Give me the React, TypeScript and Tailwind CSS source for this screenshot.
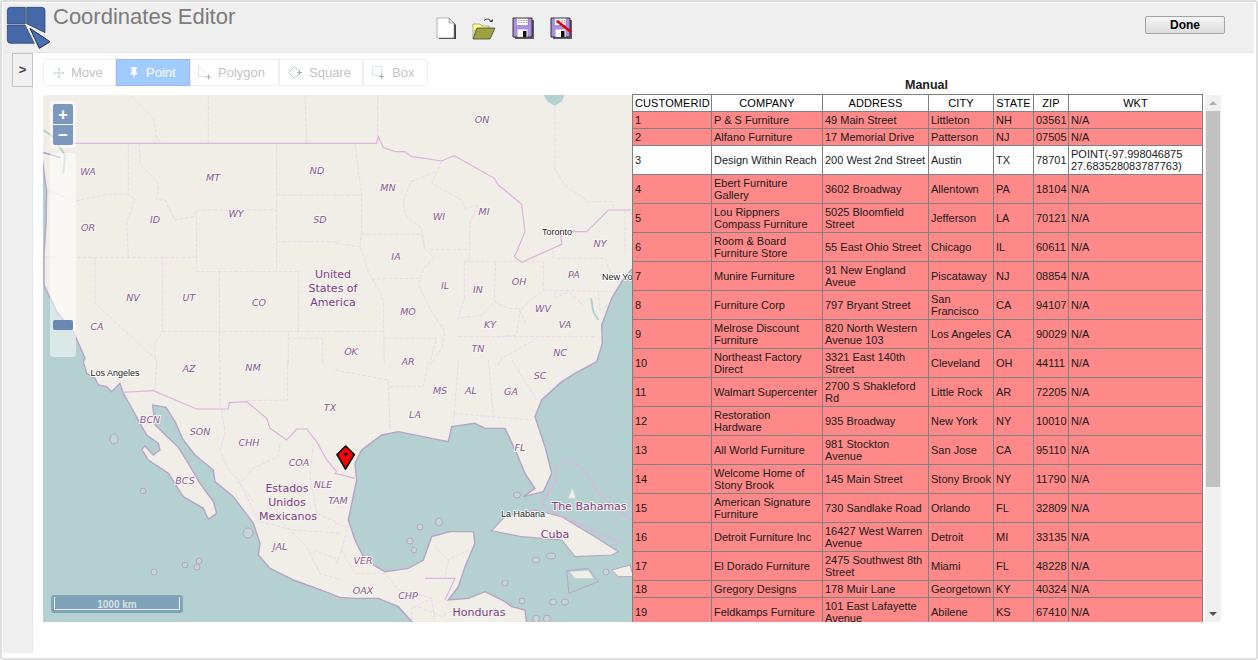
import { ReactNode } from "react";

type Row = [string, string, string, string, string, string, string];

const NA = "N/A";
const rows: Row[] = [
  ["1", "P & S Furniture", "49 Main Street", "Littleton", "NH", "03561", NA],
  ["2", "Alfano Furniture", "17 Memorial Drive", "Patterson", "NJ", "07505", NA],
  ["3", "Design Within Reach", "200 West 2nd Street", "Austin", "TX", "78701", "POINT(-97.998046875 27.683528083787763)"],
  ["4", "Ebert Furniture Gallery", "3602 Broadway", "Allentown", "PA", "18104", NA],
  ["5", "Lou Rippners Compass Furniture", "5025 Bloomfield Street", "Jefferson", "LA", "70121", NA],
  ["6", "Room & Board Furniture Store", "55 East Ohio Street", "Chicago", "IL", "60611", NA],
  ["7", "Munire Furniture", "91 New England Aveue", "Piscataway", "NJ", "08854", NA],
  ["8", "Furniture Corp", "797 Bryant Street", "San Francisco", "CA", "94107", NA],
  ["9", "Melrose Discount Furniture", "820 North Western Avenue 103", "Los Angeles", "CA", "90029", NA],
  ["10", "Northeast Factory Direct", "3321 East 140th Street", "Cleveland", "OH", "44111", NA],
  ["11", "Walmart Supercenter", "2700 S Shakleford Rd", "Little Rock", "AR", "72205", NA],
  ["12", "Restoration Hardware", "935 Broadway", "New York", "NY", "10010", NA],
  ["13", "All World Furniture", "981 Stockton Avenue", "San Jose", "CA", "95110", NA],
  ["14", "Welcome Home of Stony Brook", "145 Main Street", "Stony Brook", "NY", "11790", NA],
  ["15", "American Signature Furniture", "730 Sandlake Road", "Orlando", "FL", "32809", NA],
  ["16", "Detroit Furniture Inc", "16427 West Warren Avenue", "Detroit", "MI", "33135", NA],
  ["17", "El Dorado Furniture", "2475 Southwest 8th Street", "Miami", "FL", "48228", NA],
  ["18", "Gregory Designs", "178 Muir Lane", "Georgetown", "KY", "40324", NA],
  ["19", "Feldkamps Furniture", "101 East Lafayette Avenue", "Abilene", "KS", "67410", NA],
];

const headers = ["CUSTOMERID", "COMPANY", "ADDRESS", "CITY", "STATE", "ZIP", "WKT"];
const colWidths = [79, 111, 106, 65, 40, 35, 134];

// map points were read off 3x crops, so each list has its own origin
const pts = (ox: number, oy: number, c: number[]) => {
  const out: string[] = [];
  for (let i = 0; i < c.length; i += 2) out.push(`${ox + c[i] / 3},${oy + c[i + 1] / 3}`);
  return out.join(" ");
};
const a = (c: number[]) => pts(40, 95, c);
const b = (c: number[]) => pts(335, 95, c);
const d = (c: number[]) => pts(40, 360, c);
const e = (c: number[]) => pts(335, 360, c);

const pacific = [
  a([8, 200, 20, 290, 18, 380, 12, 480, 12, 570, 50, 650, 100, 710, 135, 790]),
  d([130, 5, 140, 40, 165, 55, 175, 75, 200, 80, 215, 95, 240, 70, 250, 100, 270, 135, 300, 190, 320, 225, 355, 250, 360, 270, 340, 285, 315, 258, 305, 268, 325, 300, 385, 340, 420, 395, 430, 410, 490, 445, 505, 478, 530, 460, 520, 425, 480, 370, 445, 310, 415, 262, 345, 195, 338, 135, 378, 142, 405, 185, 430, 240, 465, 285, 520, 330, 525, 365, 580, 410, 640, 490, 660, 550, 655, 585, 690, 625, 760, 660, 830, 685, 900, 712]),
  e([60, 715, 130, 715, 190, 740, 235, 790]),
  "40,625 40,160",
].join(" ");

const gulf = [
  "635,268",
  b([888, 525, 860, 560, 830, 610, 800, 690, 802, 745, 785, 800]),
  e([720, 40, 680, 65, 620, 120, 600, 170, 630, 260, 650, 340, 625, 395, 565, 410, 600, 385, 570, 340, 545, 280, 510, 205, 450, 205, 420, 190, 350, 200, 340, 245, 290, 235, 190, 215, 140, 225, 80, 270, 60, 310, 65, 360, 40, 480, 60, 540, 90, 600, 150, 635, 220, 625, 265, 600, 290, 530, 345, 515, 415, 515, 420, 550, 390, 620, 370, 680, 340, 720, 400, 715, 450, 695, 510, 725, 530, 740, 570, 750, 575, 790]),
  "635,625",
].join(" ");

const cuba = e([470, 512, 510, 470, 600, 450, 680, 470, 780, 530, 850, 575, 830, 585, 720, 590, 680, 540, 560, 530]);
const jamaica = e([695, 632, 760, 625, 790, 665, 702, 700]);
const hispaniola = e([830, 630, 885, 615, 895, 650, 850, 650]);

const borders = [
  a([100, 145, 400, 145]) + " " + b([125, 145, 130, 125, 145, 158, 180, 170, 210, 170, 230, 185, 270, 190, 320, 198, 358, 182, 478, 250, 490, 270, 520, 295, 560, 328, 570, 410, 545, 470, 538, 485, 560, 502, 680, 448, 678, 425, 710, 410, 755, 410, 820, 345, 888, 345]),
  d([245, 97, 340, 92, 470, 147, 565, 147, 568, 128, 620, 125, 680, 175, 690, 205, 740, 240, 770, 207, 800, 207, 830, 245, 860, 300, 890, 335]) + " " + e([0, 340, 60, 355]),
  e([270, 655, 360, 655, 330, 720]),
  e([665, 320, 700, 300, 750, 330, 790, 400, 888, 480]),
  e([620, 430, 660, 370, 665, 320]),
  e([620, 430, 640, 450, 860, 550]),
];

const states = [
  a([505, 0, 505, 145]),
  a([795, 0, 800, 145]),
  a([270, 0, 340, 70, 350, 130, 365, 145]),
  a([265, 145, 265, 295, 285, 315, 260, 380, 265, 487]),
  a([298, 145, 300, 205, 355, 265, 350, 315, 375, 315, 405, 375, 460, 365, 470, 345, 710, 345]),
  a([470, 345, 470, 530, 775, 530, 775, 710]),
  a([710, 145, 710, 530]),
  a([710, 300, 900, 300]),
  a([710, 440, 900, 440]),
  a([538, 530, 538, 810]),
  a([367, 487, 367, 710, 345, 745, 345, 795]),
  a([165, 487, 165, 625, 350, 795]),
  a([12, 487, 470, 487]),
  a([265, 297, 200, 298, 100, 320, 60, 300, 20, 285]),
  a([367, 710, 900, 710]),
  a([745, 710, 745, 810]),
  a([742, 730, 848, 730, 848, 810]),
  b([128, 0, 128, 125]),
  b([60, 145, 70, 230, 80, 300, 80, 415, 75, 450, 100, 530, 110, 550, 135, 590, 145, 620, 148, 810]),
  b([0, 300, 80, 300]),
  b([80, 418, 260, 418, 268, 462]),
  b([0, 445, 75, 455]),
  b([110, 552, 250, 550]),
  b([0, 710, 145, 710]),
  b([145, 730, 305, 730, 285, 800]),
  b([320, 198, 290, 265, 380, 315, 390, 340, 430, 330]),
  b([300, 230, 228, 260, 205, 320, 210, 360, 260, 400, 270, 460, 298, 490, 265, 520, 250, 570, 290, 650, 330, 710, 320, 760, 285, 810]),
  b([285, 463, 400, 463]),
  b([430, 330, 405, 380, 402, 500]),
  b([388, 500, 625, 500, 625, 585, 580, 620, 555, 650, 575, 690]),
  b([388, 500, 388, 610, 370, 670, 440, 660, 478, 620, 520, 640, 555, 640, 545, 720, 480, 727]),
  b([482, 500, 478, 620]),
  b([370, 725, 780, 725]),
  b([625, 585, 830, 590]),
  b([655, 465, 655, 490, 810, 490, 825, 530, 860, 545]),
  b([660, 590, 660, 610, 700, 590, 745, 630]),
  b([660, 30, 660, 225, 690, 270, 760, 320, 830, 320, 838, 345]),
  b([870, 345, 870, 480]),
  b([790, 590, 795, 645, 820, 630]),
  b([590, 740, 500, 790, 490, 810]),
  d([540, 0, 540, 147]),
  d([743, 0, 743, 120, 620, 122]),
  d([350, 0, 345, 92]),
  d([545, 150, 555, 220, 540, 270, 560, 320, 600, 370, 640, 425]),
  d([720, 250, 715, 290, 640, 325, 600, 370]),
  d([820, 250, 810, 350, 830, 460, 900, 490]),
  d([600, 370, 660, 490]),
  d([660, 485, 760, 510, 900, 520]),
  d([720, 480, 800, 560, 840, 640, 900, 660]),
  d([820, 570, 900, 600]),
  e([0, 30, 160, 60, 165, 210]),
  e([165, 80, 265, 80, 275, 30, 280, 0]),
  e([370, 0, 355, 200]),
  e([460, 0, 475, 170]),
  e([355, 160, 590, 180]),
  e([530, 0, 605, 120]),
  e([0, 490, 40, 500, 20, 570, 0, 620]),
  e([20, 570, 60, 640, 150, 640, 190, 690, 240, 700, 290, 715, 230, 745, 230, 785]),
  e([290, 715, 300, 785]),
  e([300, 560, 340, 600, 400, 570]),
  e([340, 600, 330, 655]),
  e([250, 740, 320, 770, 360, 745]),
];

const islands: [number, number, number, number][] = [
  [114, 439, 4, 5], [143, 491, 2.8, 2.8], [185, 565, 2.8, 2.8], [199, 561, 2.8, 2.8], [197, 567, 3, 3], [154, 572, 3, 3],
  [248, 533, 5, 5], [420, 527, 3, 3], [439, 522, 3.5, 4], [410, 541, 3.3, 3], [414, 550, 2.6, 3], [517, 495, 3.5, 3],
  [536, 560, 4, 3], [551, 556, 4.5, 3], [606, 572, 3, 3], [505, 583, 3, 3], [553, 602, 3.5, 3], [565, 602, 3.5, 3], [522, 601, 3, 3], [536, 619, 3.5, 4], [547, 619, 3.5, 4],
];

const stateLabels: [string, number, number][] = [
  ["ON", 482, 119], ["WA", 88, 171], ["MT", 213, 177], ["ND", 317, 170], ["ID", 155, 219], ["OR", 88, 227], ["WY", 236, 213], ["SD", 320, 219],
  ["MN", 388, 187], ["WI", 439, 216], ["MI", 484, 211], ["NV", 133, 297], ["UT", 189, 297], ["CO", 259, 302], ["CA", 97, 326], ["IA", 396, 256],
  ["IL", 445, 285], ["IN", 478, 289], ["OH", 519, 281], ["PA", 574, 274], ["NY", 600, 243], ["MO", 408, 311], ["KY", 490, 324], ["WV", 543, 308],
  ["VA", 565, 324], ["TN", 478, 348], ["NC", 560, 352], ["OK", 351, 351], ["AR", 408, 361], ["AZ", 189, 368], ["NM", 253, 367], ["TX", 330, 407],
  ["MS", 440, 390], ["AL", 471, 390], ["GA", 511, 391], ["SC", 540, 375], ["LA", 415, 414], ["FL", 520, 447], ["BCN", 150, 419], ["SON", 200, 431],
  ["CHH", 249, 442], ["COA", 299, 462], ["NLE", 323, 484], ["TAM", 338, 500], ["BCS", 185, 480], ["JAL", 280, 546], ["VER", 363, 560], ["OAX", 363, 590], ["CHP", 408, 595],
];

const countryLabels: [string, number, number][] = [
  ["United", 333, 274], ["States of", 333, 288], ["America", 333, 302], ["Estados", 287, 488], ["Unidos", 287, 502], ["Mexicanos", 288, 516],
  ["The Bahamas", 589, 506], ["Cuba", 555, 534], ["Honduras", 479, 612],
];

const cityLabels: [string, number, number][] = [
  ["Toronto", 557, 232], ["New York", 621, 277], ["Los Angeles", 115, 373], ["La Habana", 523, 514],
];

const MapDrawing = () => (
  <svg viewBox="43 95 589 527" className="absolute inset-0 h-full w-full font-['DejaVu_Sans',sans-serif]">
    <rect x="43" y="95" width="589" height="527" fill="#f1eee8" />
    {states.map((s, i) => (
      <polyline key={i} points={s} fill="none" stroke="#e8d6e8" strokeWidth="0.9" strokeDasharray="4 1.5" />
    ))}
    <polygon points={b([625, 0, 688, 0, 682, 18, 660, 32, 640, 22])} fill="#b5d0d0" />
    <polygon points={pacific} fill="#b5d0d0" stroke="#b7a3c6" strokeWidth="1.4" />
    <polygon points={gulf} fill="#b5d0d0" stroke="#b7a3c6" strokeWidth="1.4" />
    <polygon points={cuba} fill="#f1eee8" stroke="#b7a3c6" strokeWidth="1.1" />
    <polygon points={jamaica} fill="#b5d0d0" stroke="#b7a3c6" strokeWidth="1" />
    <polygon points={e([705, 635, 760, 632, 775, 655, 720, 655])} fill="#f1eee8" />
    <polygon points={hispaniola} fill="#f1eee8" stroke="#b7a3c6" strokeWidth="1" />
    <polyline points={a([10, 105, 40, 125, 55, 150, 75, 180, 70, 235])} fill="none" stroke="#b5d0d0" strokeWidth="2" />
    <polyline points={a([10, 172, 60, 188])} fill="none" stroke="#9f95bd" strokeWidth="1.4" />
    <polyline points={b([768, 610, 775, 650, 790, 675])} fill="none" stroke="#b5d0d0" strokeWidth="2" />
    {borders.map((s, i) => (
      <polyline key={i} points={s} fill="none" stroke="#dcb4dc" strokeWidth="1.2" />
    ))}
    {islands.map(([cx, cy, rx, ry], i) => (
      <ellipse key={i} cx={cx} cy={cy} rx={rx} ry={ry} fill="#c4d6d4" stroke="#b7a3c6" strokeWidth="1" />
    ))}
    <polygon points={e([700, 415, 712, 385, 722, 415])} fill="#f1eee8" />
    {stateLabels.map(([t, x, y]) => (
      <text key={t} x={x} y={y + 3.5} textAnchor="middle" fontSize="9.5" fontStyle="italic" fill="#8a5a8e" stroke="#f7f5f1" strokeWidth="2" paintOrder="stroke">
        {t}
      </text>
    ))}
    {countryLabels.map(([t, x, y]) => (
      <text key={t} x={x} y={y + 4} textAnchor="middle" fontSize="11" fill="#7c3f86" stroke="#f4f1ec" strokeWidth="2" paintOrder="stroke">
        {t}
      </text>
    ))}
    {cityLabels.map(([t, x, y]) => (
      <text key={t} x={x} y={y + 3} textAnchor="middle" fontSize="9" fontFamily="'Liberation Sans', Arial, sans-serif" fill="#222" stroke="#fff" strokeWidth="1.6" paintOrder="stroke">
        {t}
      </text>
    ))}
    <polygon points="345.7,446 337,454.5 345.5,469 354.300,454.5" fill="#f00" stroke="#000" strokeWidth="1.6" strokeLinejoin="round" />
    <path d="M345.7 452v4.5M343.5 454.3h4.5" stroke="#111" strokeWidth="1.4" />
  </svg>
);

// drawn in the crop's 3x units, so 165 units are 55 page pixels
const Logo = () => (
  <svg width="55" height="53" viewBox="0 0 165 159" className="absolute left-[-3px] top-[-3px]">
    <path d="M32 22h44v49H22V32a10 10 0 0 1 10-10z" fill="#4468a8" stroke="#26375c" strokeWidth="2" />
    <path d="M80 22h45a10 10 0 0 1 10 10v66L80 71z" fill="#4468a8" stroke="#26375c" strokeWidth="2" />
    <path d="M22 75h53l28 55H32a10 10 0 0 1-10-10z" fill="#4468a8" stroke="#26375c" strokeWidth="2" />
    <path d="M90 85l60 40-32 20z" fill="#4a70b2" stroke="#1c2a46" strokeWidth="3" strokeLinejoin="round" />
  </svg>
);

const NewFileIcon = () => (
  <svg width="22" height="23" viewBox="0 0 22 23">
    <path d="M3 3h12l5 5v14H3z" fill="#222" opacity="0.85" />
    <path d="M1 1h12l5 5v15H1z" fill="#fff" stroke="#888" strokeWidth="0.6" />
    <path d="M13 1v5h5z" fill="#ddd" stroke="#888" strokeWidth="0.6" />
  </svg>
);

const OpenIcon = () => (
  <svg width="24" height="23" viewBox="0 0 24 23">
    <path d="M12 3.500c3-2.500 6-1.500 7 1.500" fill="none" stroke="#444" strokeWidth="1" />
    <path d="M17.500 4.500l3 .5.5-3z" fill="#333" />
    <path d="M1 7h7l2 2h7v4H3v8H1z" fill="#ffff80" stroke="#777" strokeWidth="0.6" />
    <path d="M5 11h18l-5 11H1z" fill="#a0a040" stroke="#444" strokeWidth="0.8" />
  </svg>
);

const SaveIcon = ({ crossed }: { crossed?: boolean }) => (
  <svg width="23" height="23" viewBox="0 0 23 23">
    <path d="M3 3h19v19H3z" fill="#222" opacity="0.7" />
    <path d="M1 1h19v19H1z" fill="#ad8fe0" stroke="#222" strokeWidth="0.9" />
    <path d="M4.500 1.500h11.500v7H4.500z" fill="#fff" stroke="#777" strokeWidth="0.5" />
    <path d="M6 3.500h9M6 5.500h9" stroke="#888" strokeWidth="0.8" strokeDasharray="1 0.6" />
    <path d="M5.500 12.500h10v7.500h-10z" fill="#fff" />
    <path d="M11 14h3.500v6H11z" fill="#111" />
    {crossed && <path d="M7 4l14 11" stroke="#e00010" strokeWidth="2.600" />}
  </svg>
);

const iconStroke = "#c4ced4";

const MoveIcon = () => (
  <svg width="10" height="10" viewBox="0 0 11 11" fill="none" stroke={iconStroke}>
    <path d="M5.500 0v11M0 5.500h11M4 1.500l1.500-1.500L7 1.500M4 9.500l1.500 1.500L7 9.500M1.500 4L0 5.500 1.500 7M9.500 4L11 5.500 9.500 7" />
  </svg>
);

const PinIcon = () => (
  <svg width="10" height="12" viewBox="0 0 10 12" fill="#fff">
    <path d="M2 0h6v1.200L7.200 2v3.500L9 7.500H5.800L5 12l-.8-4.500H1l1.800-2V2L2 1.200z" />
  </svg>
);

const PolygonIcon = () => (
  <svg width="13" height="14" viewBox="0 0 13 14" fill="none" stroke="#bccbd8">
    <path d="M.5.500v10h8M.5.500l9 8" strokeDasharray="1 1" />
    <path d="M10.500 8.500v5M8 11h5" stroke="#9fb0bc" />
  </svg>
);

const SquareIcon = () => (
  <svg width="14" height="14" viewBox="0 0 14 14" fill="none" stroke="#b9cad8">
    <path d="M6.500.500l6 6-6 6-6-6z" />
    <path d="M9 6.500h5M11.500 4v5" stroke="#9fb0bc" />
  </svg>
);

const BoxIcon = () => (
  <svg width="13" height="13" viewBox="0 0 13 13" fill="none" stroke="#bccbd8">
    <path d="M.5.500h9v9h-9z" strokeDasharray="1 1" />
    <path d="M9.500 8v5M7 10.500h5" stroke="#9fb0bc" />
  </svg>
);

const ToolButton = ({ label, icon, size, active }: { label: string; icon: ReactNode; size: string; active?: boolean }) => (
  <div
    className={`flex h-full items-center gap-[7px] border text-[13px] ${size} ${
      active ? "border-[#9db4ff] bg-[#a0cbff] text-white" : "border-[#eeeeee] bg-white text-[#c4c4c4]"
    }`}
  >
    {icon}
    <span>{label}</span>
  </div>
);

const DataTable = () => (
  <table className="w-[570px] table-fixed border-collapse bg-white text-[11px] leading-[12px] text-[#1a1a1a]">
    <colgroup>
      {colWidths.map((w, i) => (
        <col key={i} style={{ width: w }} />
      ))}
    </colgroup>
    <thead>
      <tr className="h-[17px]">
        {headers.map((h) => (
          <th key={h} className="overflow-hidden border border-[#808080] px-[2px] py-[2px] text-center font-normal tracking-[0.1px] text-black">
            {h}
          </th>
        ))}
      </tr>
    </thead>
    <tbody>
      {rows.map((r) => (
        <tr key={r[0]} className={r[6] === NA ? "bg-[#ff8888]" : "bg-white"}>
          {r.map((c, i) => (
            <td key={i} className="border border-[#808080] px-[2px] py-[2px] align-middle">
              {c}
            </td>
          ))}
        </tr>
      ))}
    </tbody>
  </table>
);

const App = () => (
  <div className="relative h-[660px] w-[1258px] overflow-hidden rounded-[3px] border-2 border-[#dedede] bg-white p-px font-['Liberation_Sans',Arial,sans-serif]">
    <header className="relative flex h-[50px] w-[1251px] items-start border-b border-[#e2e8f4] bg-[#efefef]">
      <Logo />
      <h1 className="ml-[50px] mt-[2px] w-[200px] text-[22px] leading-[24px] text-[#7b7b7b]">Coordinates Editor</h1>
      <div className="ml-[183px] mt-[14px] flex items-start">
        <NewFileIcon />
        <div className="ml-[14px]"><OpenIcon /></div>
        <div className="ml-[16px]"><SaveIcon /></div>
        <div className="ml-[15px]"><SaveIcon crossed /></div>
      </div>
      <button className="absolute left-[1142px] top-[13px] h-[18px] w-[80px] rounded-[2px] border border-[#a3a3a3] bg-gradient-to-b from-[#f6f6f6] to-[#dcdcdc] text-[12px] font-bold leading-none text-black">
        Done
      </button>
    </header>

    <div className="flex h-[600px]">
      <aside className="relative w-[30px] shrink-0 border-r border-[#dfe6f4] bg-[#efefef]">
        <div className="ml-[9px] flex h-[34px] w-[21px] items-center justify-center border border-[#c4c4c4] bg-[#f0f0f0] pb-[1px] text-[13px] font-bold text-[#444]">
          &gt;
        </div>
      </aside>

      <main className="flex flex-1 items-start pl-[10px] pt-[6px]">
        <section className="w-[589px]">
          <div className="flex h-[27px] w-[385px] overflow-hidden rounded-[3px]">
            <ToolButton label="Move" icon={<MoveIcon />} size="w-[73px] pl-[10px]" />
            <ToolButton label="Point" icon={<PinIcon />} size="w-[74px] pl-[12px]" active />
            <ToolButton label="Polygon" icon={<PolygonIcon />} size="w-[89px] pl-[7px]" />
            <ToolButton label="Square" icon={<SquareIcon />} size="w-[84px] pl-[8px]" />
            <ToolButton label="Box" icon={<BoxIcon />} size="w-[65px] pl-[8px]" />
          </div>
          <div className="relative mt-[9px] h-[527px] w-[589px] overflow-hidden">
            <MapDrawing />
            <div className="absolute left-[7px] top-[6px] flex h-[47px] w-[26px] flex-col items-center gap-[1px] rounded-[3px] bg-white/50 pt-[3px]">
              <div className="flex h-[20px] w-[20px] items-center justify-center rounded-t-[2px] bg-[#7c98bf] text-[17px] font-bold leading-none text-white">+</div>
              <div className="flex h-[20px] w-[20px] items-center justify-center rounded-b-[2px] bg-[#7c98bf] text-[17px] font-bold leading-none text-white">−</div>
            </div>
            <div className="absolute left-[7px] top-[58px] h-[204px] w-[26px] rounded-[3px] bg-white/50">
              <div className="absolute left-[3px] top-[167px] h-[10px] w-[20px] rounded-[2px] bg-[#6a88b0]" />
            </div>
            <div className="absolute bottom-[9px] left-[8px] flex h-[18px] w-[132px] items-center justify-center rounded-[3px] bg-[#7fa3b8] text-[10px] font-bold text-[#d8e2e8]">
              <div className="absolute bottom-[3px] left-[3px] right-[3px] top-[2px] border-x border-b border-[#e8eef0]" />
              1000 km
            </div>
          </div>
        </section>

        <section className="w-[589px] pt-[20px]">
          <div className="h-[15px] w-full text-center text-[12.5px] font-bold leading-[13px] text-[#222]">Manual</div>
          <div className="flex h-[528px] w-[589px] items-start">
            <div className="h-full w-[573px] overflow-hidden bg-white">
              <DataTable />
            </div>
            <div className="relative mt-px h-[527px] w-[16px] bg-[#f0f0f0]">
              <div className="absolute left-[4px] top-[6px] h-0 w-0 border-x-[4px] border-b-[4px] border-x-transparent border-b-[#b0b0b0]" />
              <div className="absolute left-[1px] right-[1px] top-[16px] h-[376px] bg-[#c1c1c1]" />
              <div className="absolute bottom-[6px] left-[4px] h-0 w-0 border-x-[4px] border-t-[4px] border-x-transparent border-t-[#505050]" />
            </div>
          </div>
        </section>
      </main>
    </div>
  </div>
);

export default App;
